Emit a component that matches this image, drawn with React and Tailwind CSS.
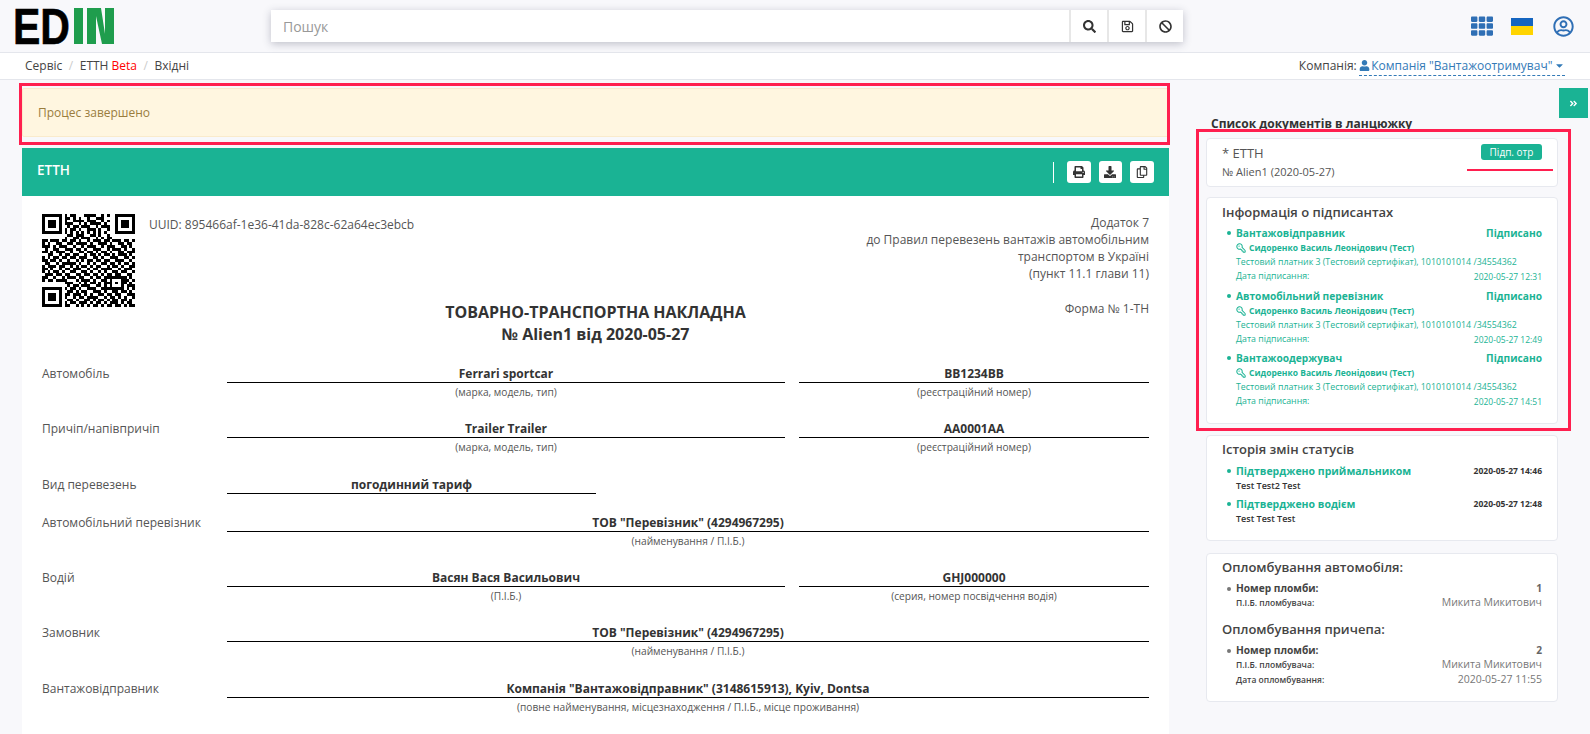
import React from 'react';
import { FaSearch, FaRegSave, FaBan, FaPrint, FaDownload, FaRegCopy, FaUser, FaCaretDown, FaAngleDoubleRight, FaTh, FaRegUserCircle } from 'react-icons/fa';
import { KeyRound } from 'lucide-react';

const qrRows = [
  '000000001011000111100101000000000',
  '000000001101010010011100000000000',
  '000000001001111011100101000000000',
  '000000001110010101111010000000000',
  '000000000101101110010111000000000',
  '000000001011010011101001000000000',
  '000000001010101010101010000000000',
  '000000000110111001101001000000000',
  '000000001001101110010101100000000',
  '110111011011010010111011011101101',
  '101001100110111101001110100110110',
  '111010111001001011100101110011010',
  '010011001110110100111001011101001',
  '110101110010011011010110100110111',
  '001100101101100101101011010111010',
  '101011011011011100110100111001101',
  '110110100100101011011011001110010',
  '011001011111010010100110110101101',
  '101110110010101101011001011010011',
  '110100101101110010110111100101110',
  '101011010011001101001010011011001',
  '011101101100110110110101101100110',
  '110010010111011001011011111111010',
  '101101111000101110100110100011101',
  '000000001110010101101011101011010',
  '000000000101101110011010100010111',
  '000000001011010011100111111110101',
  '000000000110101100111010011011010',
  '000000001101110101001101101100111',
  '000000001001011011110010110101001',
  '000000000110100110101101011011010',
  '000000001011011101011010111010110',
  '000000001100101010110101101101011',
];

const Finder = ({ x, y }) => (
  <g>
    <rect x={x} y={y} width="7" height="7" fill="#000" />
    <rect x={x + 1} y={y + 1} width="5" height="5" fill="#fff" />
    <rect x={x + 2} y={y + 2} width="3" height="3" fill="#000" />
  </g>
);

const QrCode = () => (
  <svg width="93" height="93" viewBox="0 0 33 33" shapeRendering="crispEdges" className="shrink-0">
    <rect width="33" height="33" fill="#fff" />
    {qrRows.map((row, y) =>
      row.split('').map((c, x) => (c === '1' ? <rect key={`${x}-${y}`} x={x} y={y} width="1" height="1" fill="#000" /> : null))
    )}
    <Finder x={0} y={0} />
    <Finder x={26} y={0} />
    <Finder x={0} y={26} />
  </svg>
);

const Logo = () => (
  <svg width="103" height="60" viewBox="0 0 103 60" className="ml-[-3px] mt-[-4px] shrink-0 self-start">
    <text x="0" y="48" textLength="57" lengthAdjust="spacingAndGlyphs" fontFamily="'Liberation Sans', sans-serif" fontWeight="700" fontSize="50" fill="#000" stroke="#000" strokeWidth="0.6">ED</text>
    <rect x="61" y="12" width="9" height="36" fill="#1f9d4d" />
    <rect x="74" y="12" width="9" height="36" fill="#1f9d4d" />
    <polygon points="83,12 88,12 92,38 92,48 89,48 83,20" fill="#1f9d4d" />
    <rect x="92" y="12" width="9" height="36" fill="#1f9d4d" />
  </svg>
);

const Field = ({ value, sub, w }) => (
  <div className={w}>
    <div className="h-[17px] border-b border-black text-center text-[12px] leading-[16px] font-bold text-[#333]">{value}</div>
    {sub && <div className="mt-[2px] text-center text-[10.2px] leading-[15px] text-[#555]">{sub}</div>}
  </div>
);

const Row = ({ label, h, children }) => (
  <div className={`flex ${h}`}>
    <div className="w-[185px] shrink-0 text-[12px] leading-[16px] text-[#555]">{label}</div>
    <div className="flex gap-[14px]">{children}</div>
  </div>
);

const signers = [
  { role: 'Вантажовідправник', date: '2020-05-27 12:31' },
  { role: 'Автомобільний перевізник', date: '2020-05-27 12:49' },
  { role: 'Вантажоодержувач', date: '2020-05-27 14:51' },
];

const Dot = ({ color }) => <span className={`absolute left-[-9px] top-[6px] size-[4px] rounded-full ${color}`} />;

const Card = ({ className, children }) => (
  <div className={`rounded-[4px] border border-[#e7e9ef] bg-white pl-[15px] pr-[15px] ${className}`}>{children}</div>
);

const ToolBtn = ({ children }) => (
  <button className="flex h-[22px] w-[23.5px] items-center justify-center rounded-[3px] bg-white text-[12px] text-[#333]">{children}</button>
);

const SearchBtn = ({ children }) => (
  <button className="flex h-full w-[38px] items-center justify-center border-l-2 border-[#e7e7e7] text-[13px] text-[#333]">{children}</button>
);

export default function App() {
  return (
    <div className="relative h-screen w-full overflow-hidden bg-[#f8f8fb] font-['Open_Sans',sans-serif] text-[#555]">
      {/* верхня панель */}
      <header className="flex h-[53px] items-center border-b border-[#e4e6ec] pl-[16px]">
        <Logo />
        <div className="ml-[155px] flex h-[32px] w-[912px] items-center bg-white shadow-[0_2px_8px_rgba(60,64,90,0.3)]">
          <div className="flex-1 pl-[12px] text-[14px] text-[#999]">Пошук</div>
          <SearchBtn><FaSearch /></SearchBtn>
          <SearchBtn><FaRegSave /></SearchBtn>
          <SearchBtn><FaBan /></SearchBtn>
        </div>
        <div className="ml-[288px] text-[22px] text-[#2f6fb5]"><FaTh /></div>
        <div className="ml-[18px] flex h-[17px] w-[22px] flex-col">
          <div className="h-1/2 bg-[#1565c0]" />
          <div className="h-1/2 bg-[#ffd400]" />
        </div>
        <FaRegUserCircle className="ml-[20px] text-[21px] text-[#2f6fb5]" />
      </header>

      {/* хлібні крихти */}
      <div className="relative flex h-[27px] items-center justify-between border-b border-[#e4e6ec] bg-white pl-[25px] pr-[25px] text-[12px] text-[#444]">
        <div className="flex items-center">
          <span>Сервіс</span>
          <span className="mx-[6.5px] text-[#ccc]">/</span>
          <span>ЕТТН <span className="text-[#f00]">Beta</span></span>
          <span className="mx-[6.5px] text-[#ccc]">/</span>
          <span>Вхідні</span>
        </div>
        <div className="flex items-center">
          <span>Компанія:</span>
          <span className="ml-[2px] flex items-center gap-[1.5px] border-b border-dashed border-[#337ab7] text-[#337ab7]">
            <FaUser className="text-[11px]" /> Компанія "Вантажоотримувач" <FaCaretDown className="text-[11px]" />
          </span>
        </div>
      </div>

      <button className="absolute right-[2px] top-[88px] flex h-[30px] w-[29px] items-center justify-center bg-[#1ab394] text-[9px] text-white">
        <FaAngleDoubleRight />
      </button>

      <div className="flex">
        {/* документ */}
        <div className="ml-[22px] w-[1147px]">
          <div className="relative mt-[8px] flex h-[49px] items-center rounded-[2px] border border-[#faebcc] bg-[#fff6e0] pl-[15px] text-[12px] text-[#9a7d3e]">
            Процес завершено
            <div className="absolute left-[-4px] top-[-6px] h-[62px] w-[1151px] border-[3px] border-[#ff1f4f]" />
          </div>

          <div className="mt-[11px] flex h-[48px] items-center justify-between bg-[#1ab394] pl-[15px] pr-[15.5px] text-white">
            <span className="mb-[4px] text-[13.5px] font-semibold">ЕТТН</span>
            <div className="flex items-center gap-[8px]">
              <div className="mr-[5px] h-[21px] w-px bg-white" />
              <ToolBtn><FaPrint /></ToolBtn>
              <ToolBtn><FaDownload /></ToolBtn>
              <ToolBtn><FaRegCopy /></ToolBtn>
            </div>
          </div>

          <div className="h-[540px] bg-white px-[20px] pt-[18px]">
            <div className="flex h-[87px] justify-between text-[12px] text-[#555]">
              <div className="flex">
                <QrCode />
                <div className="ml-[14px] mt-[3px] leading-[16px]">UUID: 895466af-1e36-41da-828c-62a64ec3ebcb</div>
              </div>
              <div className="text-right leading-[17px]">
                Додаток 7<br />
                до Правил перевезень вантажів автомобільним<br />
                транспортом в Україні<br />
                (пункт 11.1 глави 11)
              </div>
            </div>

            <div className="mb-[21px] grid grid-cols-[1fr_auto_1fr]">
              <div />
              <div className="text-center text-[16px] font-bold leading-[22px] text-[#333]">
                ТОВАРНО-ТРАНСПОРТНА НАКЛАДНА<br />№ Alien1 від 2020-05-27
              </div>
              <div className="text-right text-[12px] leading-[16px] text-[#555]">Форма № 1-ТН</div>
            </div>

            <Row label="Автомобіль" h="h-[55px]">
              <Field w="w-[558px]" value="Ferrari sportcar" sub="(марка, модель, тип)" />
              <Field w="w-[350px]" value="BB1234BB" sub="(реєстраційний номер)" />
            </Row>
            <Row label="Причіп/напівпричіп" h="h-[56px]">
              <Field w="w-[558px]" value="Trailer Trailer" sub="(марка, модель, тип)" />
              <Field w="w-[350px]" value="AA0001AA" sub="(реєстраційний номер)" />
            </Row>
            <Row label="Вид перевезень" h="h-[38px]">
              <Field w="w-[369px]" value="погодинний тариф" />
            </Row>
            <Row label="Автомобільний перевізник" h="h-[55px]">
              <Field w="w-[922px]" value={'ТОВ "Перевізник" (4294967295)'} sub="(найменування / П.І.Б.)" />
            </Row>
            <Row label="Водій" h="h-[55px]">
              <Field w="w-[558px]" value="Васян Вася Васильович" sub="(П.І.Б.)" />
              <Field w="w-[350px]" value="GHJ000000" sub="(серия, номер посвідчення водія)" />
            </Row>
            <Row label="Замовник" h="h-[56px]">
              <Field w="w-[922px]" value={'ТОВ "Перевізник" (4294967295)'} sub="(найменування / П.І.Б.)" />
            </Row>
            <Row label="Вантажовідправник" h="h-[55px]">
              <Field w="w-[922px]" value={'Компанія "Вантажовідправник" (3148615913), Kyiv, Dontsa'} sub="(повне найменування, місцезнаходження / П.І.Б., місце проживання)" />
            </Row>
          </div>
        </div>

        {/* бокова панель */}
        <div className="ml-[37px] w-[352px] pt-[35px]">
          <div className="pl-[5px] text-[12px] font-bold leading-[18px] text-[#333]">Список документів в ланцюжку</div>

          <div className="relative mt-[5px]">
            <div className="absolute left-[-10px] top-[-9px] h-[302px] w-[375px] border-[3px] border-[#ff1f4f]" />
            <Card className="relative h-[49px] pt-[4px]">
              <div className="text-[13px] font-medium leading-[20px] text-[#555]">* ЕТТН</div>
              <div className="mt-[1px] text-[11px] leading-[16px] text-[#555]">№ Alien1 (2020-05-27)</div>
              <div className="absolute right-[15px] top-[5px] flex h-[16px] w-[61px] items-center justify-center rounded-[3px] bg-[#1ab394] text-[10px] text-white">Підп. отр</div>
              <div className="absolute right-[4px] top-[30px] h-[2px] w-[86px] bg-[#ff1f4f]" />
            </Card>

            <Card className="mt-[10px] h-[227px] pt-[5px]">
              <div className="text-[13px] font-semibold leading-[18px] text-[#444]">Інформація о підписантах</div>
              <div className="mt-[4px] flex flex-col gap-[5.5px] pl-[14px]">
                {signers.map((s) => (
                  <div key={s.role} className="relative h-[57px] text-[#1ab394]">
                    <Dot color="bg-[#1ab394]" />
                    <div className="flex justify-between text-[10.2px] font-bold leading-[16px]">
                      <span>{s.role}</span><span>Підписано</span>
                    </div>
                    <div className="flex items-center gap-[3px] text-[8.5px] font-bold leading-[14px]">
                      <KeyRound size={10} strokeWidth={2.5} className="-scale-x-100" /> Сидоренко Василь Леонідович (Тест)
                    </div>
                    <div className="text-[8.8px] leading-[14px]">Тестовий платник 3 (Тестовий сертифікат), 1010101014 /34554362</div>
                    <div className="flex items-center justify-between text-[8.8px] leading-[15px]">
                      <span>Дата підписання:</span><span className="text-[8.5px]">{s.date}</span>
                    </div>
                  </div>
                ))}
              </div>
            </Card>
          </div>

          <Card className="mt-[11px] h-[106px] pt-[4px]">
            <div className="text-[13px] font-semibold leading-[18px] text-[#444]">Історія змін статусів</div>
            <div className="mt-[5px] flex flex-col gap-[4px] pl-[14px]">
              <div className="relative">
                <Dot color="bg-[#1ab394]" />
                <div className="flex items-center justify-between leading-[16px]">
                  <span className="text-[10.5px] font-bold text-[#1ab394]">Підтверджено приймальником</span>
                  <span className="text-[8.5px] font-bold text-[#333]">2020-05-27 14:46</span>
                </div>
                <div className="text-[9px] font-semibold leading-[13px] text-[#333]">Test Test2 Test</div>
              </div>
              <div className="relative">
                <Dot color="bg-[#1ab394]" />
                <div className="flex items-center justify-between leading-[16px]">
                  <span className="text-[10.5px] font-bold text-[#1ab394]">Підтверджено водієм</span>
                  <span className="text-[8.5px] font-bold text-[#333]">2020-05-27 12:48</span>
                </div>
                <div className="text-[9px] font-semibold leading-[13px] text-[#333]">Test Test Test</div>
              </div>
            </div>
          </Card>

          <Card className="mt-[12px] h-[149px] pt-[4px]">
            <div className="text-[13px] font-semibold leading-[18px] text-[#444]">Опломбування автомобіля:</div>
            <div className="mt-[5px] pl-[14px]">
              <div className="relative">
                <Dot color="bg-[#777]" />
                <div className="flex justify-between text-[10.2px] font-bold leading-[14px] text-[#444]"><span>Номер пломби:</span><span className="text-[#666]">1</span></div>
                <div className="flex items-center justify-between leading-[15px]"><span className="text-[8.5px] font-semibold text-[#444]">П.І.Б. пломбувача:</span><span className="text-[10.5px] text-[#777]">Микита Микитович</span></div>
              </div>
            </div>
            <div className="mt-[10px] text-[13px] font-semibold leading-[18px] text-[#444]">Опломбування причепа:</div>
            <div className="mt-[5px] pl-[14px]">
              <div className="relative">
                <Dot color="bg-[#777]" />
                <div className="flex justify-between text-[10.2px] font-bold leading-[14px] text-[#444]"><span>Номер пломби:</span><span className="text-[#666]">2</span></div>
                <div className="flex items-center justify-between leading-[15px]"><span className="text-[8.5px] font-semibold text-[#444]">П.І.Б. пломбувача:</span><span className="text-[10.5px] text-[#777]">Микита Микитович</span></div>
                <div className="flex items-center justify-between leading-[15px]"><span className="text-[8.5px] font-semibold text-[#444]">Дата опломбування:</span><span className="text-[10.5px] text-[#777]">2020-05-27 11:55</span></div>
              </div>
            </div>
          </Card>
        </div>
      </div>
    </div>
  );
}
